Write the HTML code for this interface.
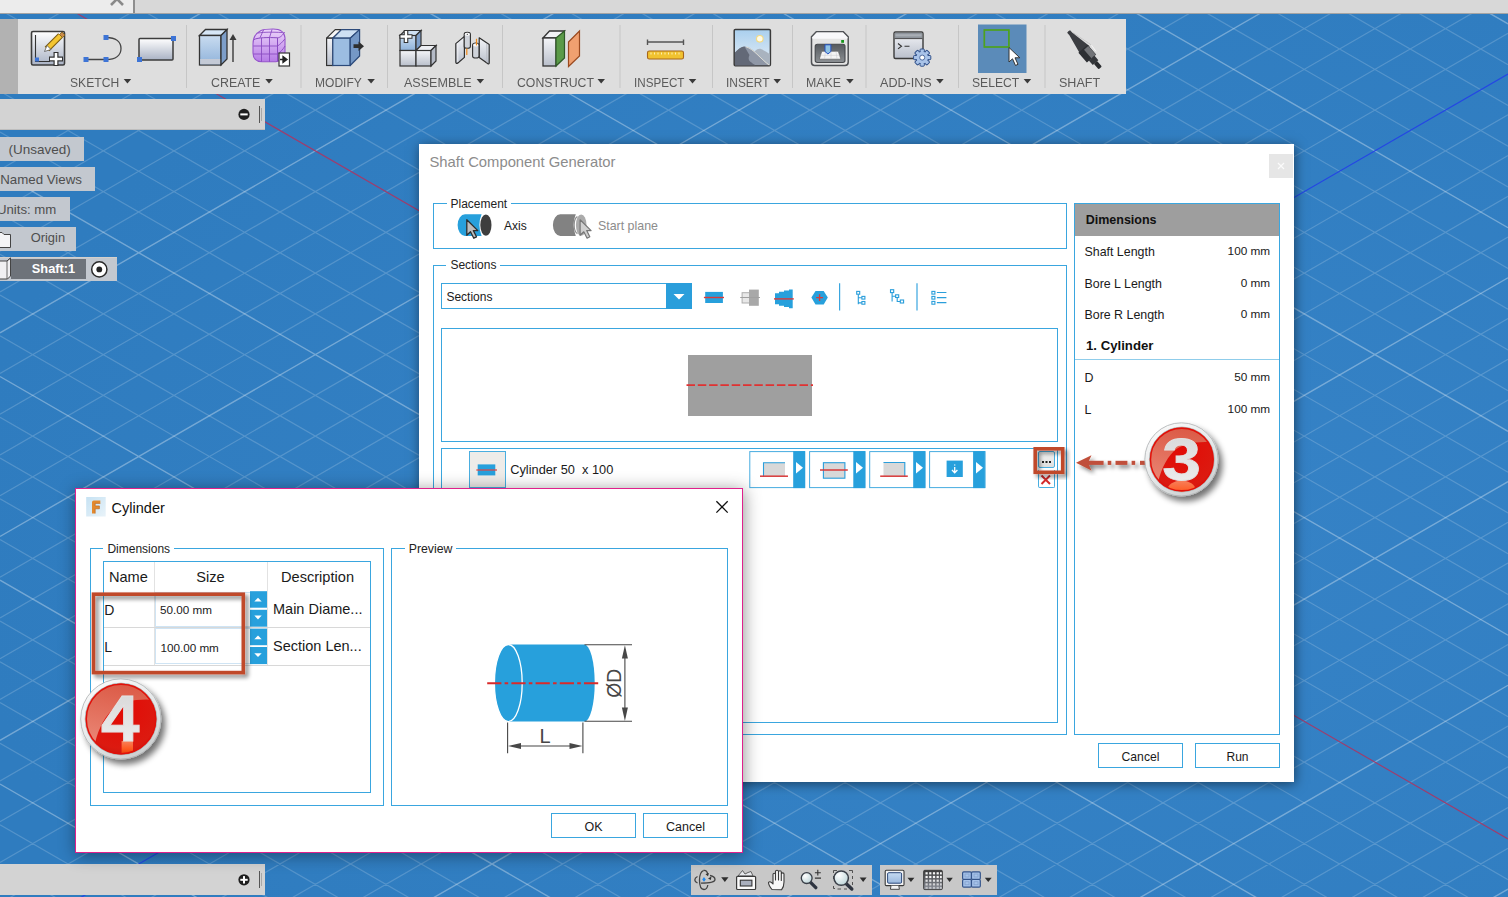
<!DOCTYPE html>
<html><head><meta charset="utf-8">
<style>
*{box-sizing:border-box;margin:0;padding:0}
html,body{width:1508px;height:897px;overflow:hidden;background:#307cc0;font-family:"Liberation Sans",sans-serif;}
.a{position:absolute}
.tl{position:absolute;font-size:12px;color:#5a5a5a;white-space:nowrap;line-height:12px;letter-spacing:0}
.sep{position:absolute;width:1px;background:#c4c4c4;top:25px;height:63px}
.gb{position:absolute;border:1px solid #3aa6df}
.glab{position:absolute;background:#fff;padding:0 4px;font-size:12px;color:#222;line-height:12px;white-space:nowrap}
.txt{position:absolute;white-space:nowrap;color:#1a1a1a}
</style></head><body>
<svg class="a" style="left:0;top:0" width="1508" height="897">
<defs><radialGradient id="bg" cx="0.72" cy="0.6" r="0.75"><stop offset="0" stop-color="#3683c7"/><stop offset="1" stop-color="#2f7cbf"/></radialGradient></defs>
<rect width="1508" height="897" fill="url(#bg)"/>
<path d="M0 -927.5 L1508 -57.6 M0 -886.8 L1508 -16.8 M0 -805.3 L1508 64.7 M0 -764.5 L1508 105.4 M0 -723.8 L1508 146.2 M0 -683.0 L1508 186.9 M0 -601.5 L1508 268.4 M0 -560.8 L1508 309.2 M0 -520.0 L1508 349.9 M0 -479.3 L1508 390.7 M0 -397.8 L1508 472.2 M0 -357.0 L1508 512.9 M0 -316.3 L1508 553.7 M0 -275.5 L1508 594.4 M0 -194.0 L1508 675.9 M0 -153.3 L1508 716.7 M0 -112.5 L1508 757.4 M0 -71.8 L1508 798.2 M0 9.7 L1508 879.7 M0 50.5 L1508 920.4 M0 91.2 L1508 961.2 M0 132.0 L1508 1001.9 M0 213.5 L1508 1083.4 M0 254.2 L1508 1124.2 M0 295.0 L1508 1164.9 M0 335.7 L1508 1205.7 M0 417.2 L1508 1287.2 M0 458.0 L1508 1327.9 M0 498.7 L1508 1368.7 M0 539.5 L1508 1409.4 M0 621.0 L1508 1490.9 M0 661.7 L1508 1531.7 M0 702.5 L1508 1572.4 M0 743.2 L1508 1613.2 M0 824.7 L1508 1694.7 M0 865.5 L1508 1735.4 M0 906.2 L1508 1776.2 M0 -34.0 L1508 -903.9 M0 6.8 L1508 -863.2 M0 47.5 L1508 -822.4 M0 88.3 L1508 -781.7 M0 169.8 L1508 -700.2 M0 210.5 L1508 -659.4 M0 251.3 L1508 -618.7 M0 292.0 L1508 -577.9 M0 373.5 L1508 -496.4 M0 414.3 L1508 -455.7 M0 455.0 L1508 -414.9 M0 495.8 L1508 -374.2 M0 577.3 L1508 -292.7 M0 618.0 L1508 -251.9 M0 658.8 L1508 -211.2 M0 699.5 L1508 -170.4 M0 781.0 L1508 -88.9 M0 821.8 L1508 -48.2 M0 862.5 L1508 -7.4 M0 903.3 L1508 33.3 M0 984.8 L1508 114.8 M0 1025.5 L1508 155.6 M0 1066.3 L1508 196.3 M0 1107.0 L1508 237.1 M0 1188.5 L1508 318.6 M0 1229.3 L1508 359.3 M0 1270.0 L1508 400.1 M0 1310.8 L1508 440.8 M0 1392.3 L1508 522.3 M0 1433.0 L1508 563.1 M0 1473.8 L1508 603.8 M0 1514.5 L1508 644.6 M0 1596.0 L1508 726.1 M0 1636.8 L1508 766.8 M0 1677.5 L1508 807.6 M0 1718.3 L1508 848.3 M0 1799.8 L1508 929.8" stroke="#ffffff" stroke-opacity="0.175" stroke-width="1.25" fill="none"/>
<path d="M0 -846.0 L1508 23.9 M0 -642.3 L1508 227.7 M0 -438.5 L1508 431.4 M0 -234.8 L1508 635.2 M0 172.7 L1508 1042.7 M0 376.5 L1508 1246.4 M0 580.2 L1508 1450.2 M0 784.0 L1508 1653.9 M0 129.0 L1508 -740.9 M0 332.8 L1508 -537.2 M0 536.5 L1508 -333.4 M0 740.3 L1508 -129.7 M0 1147.8 L1508 277.8 M0 1351.5 L1508 481.6 M0 1555.3 L1508 685.3 M0 1759.0 L1508 889.1" stroke="#ffffff" stroke-opacity="0.33" stroke-width="1.4" fill="none"/>
<path d="M0 -31.0 L1508 838.9" stroke="#a03c6c" stroke-width="1.15" fill="none"/>
<path d="M0 944.0 L1508 74.1" stroke="#2446e4" stroke-width="1.15" fill="none"/>
</svg>
<!-- TOPBAR -->
<div class="a" style="left:0;top:0;width:1508px;height:14px;background:#d8d8d8;border-bottom:1px solid #a4a4a4"></div>
<div class="a" style="left:0;top:0;width:133px;height:13px;background:#ececec"></div>
<div class="a" style="left:133px;top:0;width:2px;height:13px;background:#8e8e8e"></div>
<svg class="a" style="left:108px;top:-8px" width="18" height="16"><path d="M3 13 L9 7 L15 13" stroke="#8a8a8a" stroke-width="2.6" fill="none"/></svg>
<!-- TOOLBAR -->
<div class="a" style="left:0;top:19px;width:18px;height:75px;background:#b2b2b2"></div>
<div class="a" style="left:18px;top:19px;width:1108px;height:75px;background:#dedede"></div>
<!--TB-->
<svg class="a" style="left:0;top:0" width="1126" height="94">
<defs>
<linearGradient id="gw" x1="0" y1="0" x2="0" y2="1"><stop offset="0" stop-color="#ffffff"/><stop offset="1" stop-color="#a9b2c4"/></linearGradient>
<linearGradient id="gb1" x1="0" y1="0" x2="0" y2="1"><stop offset="0" stop-color="#c9dcf0"/><stop offset="1" stop-color="#8fb2da"/></linearGradient>
<linearGradient id="gp" x1="0" y1="0" x2="0" y2="1"><stop offset="0" stop-color="#ecd4fa"/><stop offset="1" stop-color="#b57ae6"/></linearGradient>
<linearGradient id="gg" x1="0" y1="0" x2="0" y2="1"><stop offset="0" stop-color="#f4f5f8"/><stop offset="1" stop-color="#b9bfcb"/></linearGradient>
<linearGradient id="gsky" x1="0" y1="0" x2="0" y2="1"><stop offset="0" stop-color="#a9cfee"/><stop offset="1" stop-color="#e6eef6"/></linearGradient>
</defs>
<!-- separators -->
<g stroke="#c6c6c6" stroke-width="1">
<path d="M186.5 25V88M301 25V88M387.5 25V88M502.5 25V88M620 25V88M712.5 25V88M792.5 25V88M866 25V88M958.5 25V88M1045 25V88"/>
</g>
<!-- 1 sketch -->
<rect x="31.5" y="31.5" width="33" height="33.5" rx="1.5" fill="url(#gw)" stroke="#3c3c3c" stroke-width="1.6"/>
<path d="M35.5 35V61.5H50" stroke="#333" stroke-width="1.1" fill="none"/>
<rect x="35" y="57.5" width="4" height="4" fill="#3d74d6"/>
<path d="M47 49 L60.5 35.5" stroke="#7a5a10" stroke-width="6.5" stroke-linecap="butt"/>
<path d="M47 49 L60.5 35.5" stroke="#f3c531" stroke-width="4.5"/>
<path d="M59.5 34.5 L62 32 L65 35 L62.5 37.5Z" fill="#c98a4a" stroke="#7a5a10" stroke-width="0.8"/>
<path d="M44.5 51.5 L47 45.5 L51 49.5Z" fill="#fff" stroke="#555" stroke-width="0.8"/>
<path d="M56 52V66M49 59H63" stroke="#333" stroke-width="5"/>
<path d="M56 53V65M50 59H62" stroke="#fff" stroke-width="2.6"/>
<!-- 2 line arc -->
<path d="M86 59.5H106M106 37.5C116 37.5 121 42 121 48.5C121 55 116 59.5 106 59.5" stroke="#444" stroke-width="1.3" fill="none"/>
<rect x="83.5" y="57" width="5" height="5" fill="#3d74d6"/><rect x="103.5" y="57" width="5" height="5" fill="#3d74d6"/><rect x="103.5" y="35" width="5" height="5" fill="#3d74d6"/>
<!-- 3 rect -->
<rect x="139" y="38.5" width="34" height="21.5" rx="1" fill="url(#gw)" stroke="#3c3c3c" stroke-width="1.5"/>
<rect x="137" y="57" width="5" height="5" fill="#3d74d6"/><rect x="171" y="36" width="5" height="5" fill="#3d74d6"/>
<!-- 4 extrude -->
<path d="M199.5 35.5 L205.5 29.5 L227 29.5 L221 35.5Z" fill="#d6e6f6" stroke="#333" stroke-width="1.3"/>
<rect x="199.5" y="35.5" width="21.5" height="29.5" fill="url(#gb1)" stroke="#333" stroke-width="1.3"/>
<rect x="200.2" y="59" width="20.2" height="5.3" fill="#c4cad6"/>
<path d="M221 35.5 L227 29.5 L227 59 L221 65Z" fill="#7d9ec9" stroke="#333" stroke-width="1.3"/>
<path d="M233 62V37" stroke="#3a3a3a" stroke-width="1.4"/><path d="M229.5 40 L233 34 L236.5 40Z" fill="#3a3a3a"/>
<!-- 5 form -->
<path d="M253 44C253 38 256 33 261 30.5C264 29.3 268 29 273 29C279 29 284.5 31 285 38V52C285 57 281 61.5 276 61.8H262C256 61.8 253 58 253 53Z" fill="url(#gp)" stroke="#9656cc" stroke-width="1.1"/>
<path d="M254 39.5C258 37.5 268 37.3 277.5 37.8C280 37.9 283 35 284.5 32" fill="none" stroke="#8a4cc2" stroke-width="1"/>
<path d="M277.5 37.8V61.5" stroke="#8a4cc2" stroke-width="1"/>
<path d="M253.3 46H277.5M253.3 54H277.5M261.5 38V61.8M269.5 37.5V61.8M258 33C265 32 272 32 282 32.5M263.5 30L260 37.8M272 29.5L269.5 37.5M277.5 46C280 44.5 282.5 42 284.8 39M277.5 54C280 52.5 283 49.5 285 46" fill="none" stroke="#8a4cc2" stroke-width="0.9"/>
<rect x="279" y="53" width="10.5" height="13" fill="#fff" stroke="#333" stroke-width="1.2"/>
<path d="M280 59.5H285M283 56.5L287 59.5L283 62.5Z" stroke="#222" stroke-width="1.3" fill="#222"/>
<!-- 6 modify -->
<path d="M326.6 38.2L335.2 29.6H341.5L332.8 38.2Z" fill="#f8f8f8" stroke="#333" stroke-width="1.2" stroke-linejoin="round"/>
<rect x="326.6" y="38.2" width="6.2" height="27.3" fill="url(#gg)" stroke="#333" stroke-width="1.2"/>
<path d="M332.8 38.2L341.5 29.6H359.6L350.2 38.2Z" fill="#cde0f3" stroke="#2c4a7a" stroke-width="1.2" stroke-linejoin="round"/>
<rect x="332.8" y="38.2" width="17.4" height="27.3" fill="#9cbde1" stroke="#2c4a7a" stroke-width="1.2"/>
<path d="M350.2 38.2L359.6 29.6V56L350.2 65.5Z" fill="#7598c6" stroke="#2c4a7a" stroke-width="1.2" stroke-linejoin="round"/>
<path d="M353.5 44.3H358.5V41.5L364 46.2L358.5 50.9V48.1H353.5Z" fill="#2e2e2e"/>
<!-- 7 assemble -->
<path d="M400 35.5 L405 30.5 L421 30.5 L416 35.5Z" fill="#cfe0f2" stroke="#333" stroke-width="1.2"/>
<rect x="400" y="35.5" width="16" height="15" fill="url(#gb1)" stroke="#333" stroke-width="1.2"/>
<path d="M416 35.5 L421 30.5 L421 45.5 L416 50.5Z" fill="#7d9ec9" stroke="#333" stroke-width="1.2"/>
<path d="M416 50.5 L421 45.5 L436 45.5 L431 50.5Z" fill="#eef0f4" stroke="#333" stroke-width="1.2"/>
<rect x="400" y="50.5" width="16" height="15.5" fill="url(#gg)" stroke="#333" stroke-width="1.2"/>
<rect x="416" y="50.5" width="15" height="15.5" fill="url(#gg)" stroke="#333" stroke-width="1.2"/>
<path d="M431 50.5 L436 45.5 L436 61 L431 66Z" fill="#b4bac6" stroke="#333" stroke-width="1.2"/>
<path d="M406 30V43M399.5 36.5H412.5" stroke="#333" stroke-width="4.6"/>
<path d="M406 31V42M400.5 36.5H411.5" stroke="#fff" stroke-width="2.4"/>
<!-- 8 joint -->
<path d="M455.8 43.6L464.4 36.4V57.4L457.6 63.2Q455.8 64 455.8 62Z" fill="url(#gg)" stroke="#2e2e2e" stroke-width="1.2" stroke-linejoin="round"/>
<path d="M457.8 43V62" stroke="#f4f4f6" stroke-width="0.9"/>
<path d="M464.2 34.2Q464.2 32.3 467.3 32.3Q470.4 32.3 470.4 34.2V46.5Q470.4 48.3 467.3 48.3Q464.2 48.3 464.2 46.5Z" fill="#cfd3da" stroke="#2e2e2e" stroke-width="1.1"/>
<ellipse cx="467.3" cy="34.3" rx="2.6" ry="1.5" fill="#fafafa"/><circle cx="467.3" cy="34.3" r="0.6" fill="#333"/>
<path d="M466.8 48.6V55" stroke="#f08a1c" stroke-width="1.2"/>
<path d="M479.2 37.8L489.2 44.6V63.2Q489 64.3 487.6 63.4L479.2 57.4Z" fill="url(#gg)" stroke="#2e2e2e" stroke-width="1.2" stroke-linejoin="round"/>
<path d="M486.8 43.8V62.3" stroke="#b8bcc4" stroke-width="0.9"/>
<path d="M472.6 45Q472.6 43 475.8 43Q479 43 479 45V56.2Q479 58 475.8 58Q472.6 58 472.6 56.2Z" fill="#cfd3da" stroke="#2e2e2e" stroke-width="1.1"/>
<ellipse cx="475.8" cy="45" rx="2.6" ry="1.5" fill="#fafafa"/>
<path d="M476.5 38.8V45.4" stroke="#f08a1c" stroke-width="1.2"/>
<!-- 9 construct -->
<path d="M543 38 L549.5 31 L564.5 31 L558 38Z" fill="#f2f3f6" stroke="#333" stroke-width="1.3"/>
<rect x="543" y="38" width="13" height="28" fill="url(#gg)" stroke="#333" stroke-width="1.3"/>
<path d="M556 38 L564.5 31 L564.5 58 L556 66Z" fill="#5a9a48" stroke="#2f5a28" stroke-width="1.2"/>
<path d="M568.5 42 L579.5 31 L579.5 56 L568.5 66.5Z" fill="#f0a070" stroke="#9a4a20" stroke-width="1.2"/>
<!-- 10 inspect -->
<path d="M647.5 42H683.5M647.5 39.5V45M683.5 39.5V45" stroke="#555" stroke-width="1.4"/>
<rect x="647.5" y="51" width="36" height="8" rx="1.8" fill="#f1c230" stroke="#a8661a" stroke-width="1.1"/>
<path d="M651 52.5V54.5M654.5 52.5V54.5M658 52.5V54.5M661.5 52.5V54.5M665 52.5V54.5M668.5 52.5V54.5M672 52.5V54.5M675.5 52.5V54.5M679 52.5V54.5" stroke="#fff6c0" stroke-width="0.9"/>
<!-- 11 insert -->
<rect x="734.2" y="29.4" width="36.2" height="36.3" rx="1.2" fill="url(#gsky)" stroke="#3a3a3a" stroke-width="1.5"/>
<circle cx="759.8" cy="38.8" r="3.3" fill="#fffbe8" stroke="#f5da80" stroke-width="1.1"/>
<path d="M754.5 51.5C756.5 49.5 758 48.8 759.5 48.8C762 48.8 766 51.5 769.8 54.2V65H760Z" fill="#a9b3bf"/>
<path d="M735 52.5C738 49.5 741.5 46.6 744.5 46.6C749 46.6 753 50 757 54C761 58 765.5 62.5 769.3 65.2H735Z" fill="#8f97a6"/>
<path d="M735 52.5C738 49.5 741.5 46.6 744.5 46.6C746 49 747.5 52 749.5 55C748.5 57 748 59.5 750 61.5C752 63 754 64.5 755.5 65.2H735Z" fill="#636977"/>
<path d="M746 46.8C750 48 753 50.5 757 54.2C761 58 765.5 62.5 769.3 65.2" stroke="#f0ede0" stroke-width="0.8" fill="none"/>
<!-- 12 make -->
<defs><linearGradient id="cav" x1="0" y1="0" x2="0" y2="1"><stop offset="0" stop-color="#55595e"/><stop offset="1" stop-color="#8c9094"/></linearGradient></defs>
<path d="M816.3 31.8H843.3L848.2 36.8V62.3Q848.2 65.5 845 65.5H814.6Q811.5 65.5 811.5 62.3V36.8Z" fill="#e4e4e4" stroke="#505256" stroke-width="1.5"/>
<path d="M816.8 32.6H842.8L847.3 37.2V38.8H812.4V37.2Z" fill="#f8f8fa"/>
<rect x="815.2" y="44.2" width="29.8" height="18.3" rx="2.2" fill="url(#cav)" stroke="#46484c" stroke-width="1.1"/>
<path d="M819.3 59.2L821.8 51.3H838.3L840.9 59.2Z" fill="#f4f4f4" stroke="#555" stroke-width="0.6"/>
<path d="M820.5 55.3H839.7M825.5 51.5L824.5 59M831 51.5V59M836 51.5L837 59" stroke="#c8c8cc" stroke-width="0.5"/>
<path d="M825 44.8H830.9V51.5L827.95 54L825 51.5Z" fill="#8fc2e4" stroke="#2450c0" stroke-width="1"/>
<rect x="841.2" y="40" width="2.8" height="2.8" fill="#15941a"/>
<!-- 13 add-ins -->
<rect x="894" y="32" width="29" height="26.5" rx="1.5" fill="url(#gg)" stroke="#3a3a3a" stroke-width="1.4"/>
<rect x="894.8" y="32.8" width="27.4" height="5.6" fill="#8e949c"/>
<rect x="895.5" y="34.2" width="26" height="2.2" fill="#a9aeb5"/>
<path d="M894.7 38.6H922.3" stroke="#3a3a3a" stroke-width="0.9"/>
<path d="M898 43.5L901.5 46.2L898 48.9M904.5 46.3H909.5" stroke="#333" stroke-width="1.1" fill="none"/>
<g transform="translate(922.2 57.6)">
<g fill="#a9c3e8" stroke="#30508a" stroke-width="1"><rect x="-2.1" y="-8.6" width="4.2" height="4" rx="0.8" transform="rotate(0)"/><rect x="-2.1" y="-8.6" width="4.2" height="4" rx="0.8" transform="rotate(45)"/><rect x="-2.1" y="-8.6" width="4.2" height="4" rx="0.8" transform="rotate(90)"/><rect x="-2.1" y="-8.6" width="4.2" height="4" rx="0.8" transform="rotate(135)"/><rect x="-2.1" y="-8.6" width="4.2" height="4" rx="0.8" transform="rotate(180)"/><rect x="-2.1" y="-8.6" width="4.2" height="4" rx="0.8" transform="rotate(225)"/><rect x="-2.1" y="-8.6" width="4.2" height="4" rx="0.8" transform="rotate(270)"/><rect x="-2.1" y="-8.6" width="4.2" height="4" rx="0.8" transform="rotate(315)"/></g>
<circle r="6.3" fill="#a9c3e8" stroke="#30508a" stroke-width="1"/>
<g fill="#a9c3e8"><rect x="-1.5" y="-7.6" width="3" height="3" rx="0.8" transform="rotate(0)"/><rect x="-1.5" y="-7.6" width="3" height="3" rx="0.8" transform="rotate(45)"/><rect x="-1.5" y="-7.6" width="3" height="3" rx="0.8" transform="rotate(90)"/><rect x="-1.5" y="-7.6" width="3" height="3" rx="0.8" transform="rotate(135)"/><rect x="-1.5" y="-7.6" width="3" height="3" rx="0.8" transform="rotate(180)"/><rect x="-1.5" y="-7.6" width="3" height="3" rx="0.8" transform="rotate(225)"/><rect x="-1.5" y="-7.6" width="3" height="3" rx="0.8" transform="rotate(270)"/><rect x="-1.5" y="-7.6" width="3" height="3" rx="0.8" transform="rotate(315)"/></g>
<circle r="2.5" fill="#fff" stroke="#30508a" stroke-width="0.8"/>
</g>
<!-- 14 select -->
<rect x="978" y="24.5" width="48.5" height="48.5" fill="#5b8bb9"/>
<rect x="984.3" y="30" width="24.6" height="17" fill="none" stroke="#4ea21e" stroke-width="1.7"/>
<path d="M1009 47.5 L1009 62 L1012.5 58.8 L1015.5 65.5 L1018 64.3 L1015 57.8 L1019.8 57.8Z" fill="#fff" stroke="#333" stroke-width="1"/>
<!-- 15 shaft -->
<g transform="translate(1068.6 31.4) rotate(49)">
<path d="M4 -2.6L25 -8.2L33 -7.6" stroke="#f6f6f6" stroke-width="0.9" fill="none"/>
<path d="M4 -2.6L25 -8.2" stroke="#9a9a9a" stroke-width="0.5" fill="none"/>
<path d="M0 -1.9Q-0.8 0 0 1.9L3.5 2L25 6.2V-6.2L3.5 -2Z" fill="#3b3d41"/>
<rect x="22.5" y="-5.6" width="13" height="12.2" fill="#2d2f33"/>
<rect x="24" y="-5.2" width="11.5" height="5.6" fill="#717377"/>
<rect x="35.2" y="-3.6" width="6" height="7.4" fill="#34363a"/>
<rect x="41" y="-2.1" width="7.3" height="4.4" rx="1" fill="#2a2c2f"/>
</g>
</svg>
<div class="tl" style="left:70.3px;top:76.2px;font-size:13.7px;line-height:13.7px;transform:scaleX(0.885);transform-origin:0 0">SKETCH</div>
<div class="tl" style="left:211.4px;top:76.2px;font-size:13.7px;line-height:13.7px;transform:scaleX(0.905);transform-origin:0 0">CREATE</div>
<div class="tl" style="left:315.1px;top:76.2px;font-size:13.7px;line-height:13.7px;transform:scaleX(0.88);transform-origin:0 0">MODIFY</div>
<div class="tl" style="left:403.9px;top:76.2px;font-size:13.7px;line-height:13.7px;transform:scaleX(0.916);transform-origin:0 0">ASSEMBLE</div>
<div class="tl" style="left:516.6px;top:76.2px;font-size:13.7px;line-height:13.7px;transform:scaleX(0.895);transform-origin:0 0">CONSTRUCT</div>
<div class="tl" style="left:634px;top:76.2px;font-size:13.7px;line-height:13.7px;transform:scaleX(0.85);transform-origin:0 0">INSPECT</div>
<div class="tl" style="left:726px;top:76.2px;font-size:13.7px;line-height:13.7px;transform:scaleX(0.87);transform-origin:0 0">INSERT</div>
<div class="tl" style="left:806.4px;top:76.2px;font-size:13.7px;line-height:13.7px;transform:scaleX(0.9);transform-origin:0 0">MAKE</div>
<div class="tl" style="left:879.9px;top:76.2px;font-size:13.7px;line-height:13.7px;transform:scaleX(0.92);transform-origin:0 0">ADD-INS</div>
<div class="tl" style="left:972.2px;top:76.2px;font-size:13.7px;line-height:13.7px;transform:scaleX(0.887);transform-origin:0 0">SELECT</div>
<div class="tl" style="left:1059.2px;top:76.2px;font-size:13.7px;line-height:13.7px;transform:scaleX(0.915);transform-origin:0 0">SHAFT</div>
<svg class="a" style="left:0;top:0" width="1126" height="94"><g fill="#3a3a3a">
<path d="M123.7 79H131.2L127.45 83.6Z"/><path d="M265.3 79H272.8L269 83.6Z"/><path d="M367.4 79H374.9L371.1 83.6Z"/><path d="M476.6 79H484.1L480.3 83.6Z"/><path d="M597.5 79H605L601.2 83.6Z"/><path d="M688.8 79H696.3L692.5 83.6Z"/><path d="M773.5 79H781L777.2 83.6Z"/><path d="M846.2 79H853.7L849.9 83.6Z"/><path d="M936.2 79H943.7L939.9 83.6Z"/><path d="M1023.7 79H1031.2L1027.4 83.6Z"/>
</g></svg>

<!--/TB-->
<!-- BROWSER -->
<div class="a" style="left:0;top:99px;width:265px;height:31px;background:#d3d3d3;border-bottom:1px solid #bdbdbd"></div>
<!--BR-->
<svg class="a" style="left:0;top:99px" width="266" height="32"><circle cx="244" cy="15.4" r="5.6" fill="#1e1e1e"/><rect x="240.3" y="14.4" width="7.4" height="2" fill="#fff"/><path d="M259.5 7V24" stroke="#555" stroke-width="1"/><path d="M261.5 9V22" stroke="#a8a8a8" stroke-width="1"/></svg>
<div class="a" style="left:0;top:136.7px;width:84px;height:24.5px;background:#c3c8cf"></div>
<div class="a" style="left:0;top:166.6px;width:95px;height:24.5px;background:#c3c8cf"></div>
<div class="a" style="left:0;top:196.7px;width:70px;height:24.5px;background:#c3c8cf"></div>
<div class="a" style="left:0;top:226.6px;width:76px;height:24.5px;background:#c3c8cf"></div>
<div class="a" style="left:0;top:256.7px;width:117px;height:24.3px;background:#c3c8cf;border-top:1px solid #d4d0cc"></div>
<div class="a" style="left:11px;top:259.1px;width:75px;height:19.6px;background:#6e737a"></div>
<div class="txt" style="left:8.4px;top:142.7px;font-size:13.5px;line-height:13.5px;color:#4e4e4e">(Unsaved)</div>
<div class="txt" style="left:0.2px;top:172.6px;font-size:13.3px;line-height:13.3px;color:#4e4e4e">Named Views</div>
<div class="txt" style="left:-3px;top:202.9px;font-size:13.2px;line-height:13.2px;color:#4e4e4e">Units: mm</div>
<div class="txt" style="left:30.7px;top:232.4px;font-size:12.9px;line-height:12.9px;color:#4e4e4e">Origin</div>
<div class="txt" style="left:31.8px;top:262.7px;font-size:12.8px;line-height:12.8px;color:#fff;font-weight:bold">Shaft:1</div>
<svg class="a" style="left:0;top:225px" width="120" height="60">
<path d="M-2 7.5H2L4 9.5H10.5V22.5H-2Z" fill="#f4f4f6" stroke="#444" stroke-width="1"/>
<path d="M-2 36H7L10.5 33V51L7.5 54H-2Z" fill="#f0f0f2" stroke="#444" stroke-width="1"/>
<path d="M7 36V54M7 36L10.5 33" stroke="#444" stroke-width="0.8" fill="none"/>
<circle cx="99.3" cy="44.4" r="7.6" fill="#fff" stroke="#2a2a2a" stroke-width="1.5"/>
<circle cx="99.3" cy="44.4" r="2.9" fill="#222"/>
</svg>


<!--/BR-->
<!-- BOTTOM PANELS -->
<div class="a" style="left:0;top:864px;width:265px;height:31px;background:#d3d3d3"></div>
<svg class="a" style="left:0;top:864px" width="266" height="32"><circle cx="244" cy="15.8" r="5.6" fill="#1e1e1e"/><rect x="240.3" y="14.8" width="7.4" height="2" fill="#fff"/><rect x="243" y="12.1" width="2" height="7.4" fill="#fff"/><path d="M259.5 7V24" stroke="#555" stroke-width="1"/><path d="M261.5 9V22" stroke="#a8a8a8" stroke-width="1"/></svg>
<div class="a" style="left:691px;top:865px;width:181px;height:30px;background:#c8c8c8"></div>
<div class="a" style="left:880px;top:865px;width:117px;height:30px;background:#c8c8c8"></div>
<!--NV-->
<svg class="a" style="left:0;top:0" width="1000" height="897">
<defs>
<radialGradient id="lens" cx="0.35" cy="0.3" r="0.8"><stop offset="0" stop-color="#ffffff"/><stop offset="1" stop-color="#b9d2d6"/></radialGradient>
<linearGradient id="scr" x1="0" y1="0" x2="0" y2="1"><stop offset="0" stop-color="#c6dbf2"/><stop offset="1" stop-color="#9ab8de"/></linearGradient>
<linearGradient id="grd" x1="0" y1="0" x2="0" y2="1"><stop offset="0" stop-color="#3a3a3a"/><stop offset="1" stop-color="#8a8e98"/></linearGradient>
</defs>
<g fill="#2e2e2e">
<path d="M721.2 877.3H728.5L724.85 881.9Z"/><path d="M859.7 877.5H866.6L863.15 882Z"/><path d="M907.5 877.8H914.4L910.95 881.9Z"/><path d="M946.4 877.8H952.8L949.6 881.9Z"/><path d="M984.8 877.8H991.7L988.25 881.9Z"/>
</g>
<!-- orbit -->
<g fill="none" stroke="#444" stroke-width="1.3">
<path d="M703.5 870.5C700 872 699.5 876 699.5 880C699.5 885 701 889.5 704 889.5C706.5 889.5 707.5 887 707.8 885"/>
<path d="M697.5 876.5C695.5 877.5 694.8 879 694.8 880C694.8 881.5 696 882.3 697.5 883"/>
<path d="M701 883.2C706 883.2 715 882.5 715 879.5C715 877.5 712.5 876 710 875.5"/>
<path d="M703.5 870.5C706 870 707.5 872 707.5 874"/>
</g>
<path d="M705.5 874.3L709 873L708 876.2Z" fill="#333"/><path d="M708 878.5L711.5 876.5L710.8 880Z" fill="#333"/>
<path d="M704 877L705.8 879.4L704 881.8L702.2 879.4Z" fill="#1e88f0"/>
<!-- fit -->
<path d="M738 876L742.5 870.5L745 874L748 872.5L751 871.5L753 876Z" fill="#e6e8ec" stroke="#555" stroke-width="0.9"/>
<rect x="736.6" y="876.3" width="19" height="13.2" rx="1" fill="#fafafa" stroke="#3a3a3a" stroke-width="1.2"/>
<rect x="740.3" y="880.2" width="11.6" height="5.8" fill="#a9afbd" stroke="#333" stroke-width="1.1"/>
<!-- hand -->
<path d="M772 889.5C770 887 768.5 884 768.5 882.5C769.5 881 771.5 882 773 884V874.5C773 872.8 775.5 872.8 775.5 874.5V880V871.5C775.5 869.8 778.5 869.8 778.5 871.5V880V872C778.5 870.3 781.3 870.3 781.3 872V880.5V874C781.3 872.5 784 872.5 784 874V882C784 885.5 783 888 781.5 889.8Z" fill="#f7f7f7" stroke="#3a3a3a" stroke-width="1.1" stroke-linejoin="round"/>
<!-- zoom +- -->
<path d="M810.8 882.6L815.8 887.6" stroke="#2e3440" stroke-width="3.4" stroke-linecap="round"/>
<circle cx="806.7" cy="878.1" r="5.4" fill="url(#lens)" stroke="#3a3f48" stroke-width="1.3"/>
<path d="M817.8 869.8V875.6M814.9 872.8H820.8M814.9 878.1H821" stroke="#333" stroke-width="1.1"/>
<!-- zoom window -->
<path d="M833.5 870.5H837M849 870.5H852.5V873M852.5 876V879M852.5 882V885M837.5 889H841M844 889H847M833.5 886V888.5H835M833.5 870.5V873M833.5 876V879" stroke="#444" stroke-width="0.9" stroke-dasharray="none" fill="none"/>
<path d="M846 883.5L851.8 889" stroke="#2e3440" stroke-width="3.4" stroke-linecap="round"/>
<circle cx="841.2" cy="878.1" r="7.2" fill="url(#lens)" stroke="#3a3f48" stroke-width="1.5"/>
<!-- display -->
<rect x="885.2" y="870.3" width="18.8" height="15.3" rx="1.2" fill="#f4f4f4" stroke="#3a3a3a" stroke-width="1.1"/>
<rect x="887.6" y="872.7" width="14" height="10.5" rx="1.2" fill="url(#scr)" stroke="#2e4a7c" stroke-width="1"/>
<path d="M891 885.8L890.4 889.3H899.4L898.8 885.8" fill="#f4f4f4" stroke="#3a3a3a" stroke-width="0.9"/>
<!-- grid -->
<rect x="923.6" y="870.3" width="18.8" height="19.3" rx="1.2" fill="url(#grd)" stroke="#3a3a3a" stroke-width="0.9"/>
<g fill="#fff" opacity="0.95">
<rect x="925.5" y="872.2" width="2.2" height="2.2"/><rect x="929.2" y="872.2" width="2.2" height="2.2"/><rect x="932.9" y="872.2" width="2.2" height="2.2"/><rect x="936.6" y="872.2" width="2.2" height="2.2"/><rect x="940" y="872.2" width="1.8" height="2.2"/>
<rect x="925.5" y="875.9" width="2.2" height="2.2"/><rect x="929.2" y="875.9" width="2.2" height="2.2"/><rect x="932.9" y="875.9" width="2.2" height="2.2"/><rect x="936.6" y="875.9" width="2.2" height="2.2"/><rect x="940" y="875.9" width="1.8" height="2.2"/>
<rect x="925.5" y="879.6" width="2.2" height="2.2" opacity="0.85"/><rect x="929.2" y="879.6" width="2.2" height="2.2" opacity="0.85"/><rect x="932.9" y="879.6" width="2.2" height="2.2" opacity="0.85"/><rect x="936.6" y="879.6" width="2.2" height="2.2" opacity="0.85"/><rect x="940" y="879.6" width="1.8" height="2.2" opacity="0.85"/>
<rect x="925.5" y="883.3" width="2.2" height="2.2" opacity="0.7"/><rect x="929.2" y="883.3" width="2.2" height="2.2" opacity="0.7"/><rect x="932.9" y="883.3" width="2.2" height="2.2" opacity="0.7"/><rect x="936.6" y="883.3" width="2.2" height="2.2" opacity="0.7"/><rect x="940" y="883.3" width="1.8" height="2.2" opacity="0.7"/>
<rect x="925.5" y="886.8" width="2.2" height="2" opacity="0.55"/><rect x="929.2" y="886.8" width="2.2" height="2" opacity="0.55"/><rect x="932.9" y="886.8" width="2.2" height="2" opacity="0.55"/><rect x="936.6" y="886.8" width="2.2" height="2" opacity="0.55"/><rect x="940" y="886.8" width="1.8" height="2" opacity="0.55"/>
</g>
<!-- viewports -->
<g fill="#a7c3ea" stroke="#34548a" stroke-width="1.2">
<rect x="962.6" y="871.8" width="8.8" height="7.6" rx="1.2"/><rect x="971.5" y="871.8" width="8.8" height="7.6" rx="1.2"/>
<rect x="962.6" y="879.5" width="8.8" height="7.6" rx="1.2"/><rect x="971.5" y="879.5" width="8.8" height="7.6" rx="1.2"/>
</g>
<g fill="none" stroke="#7d9cc9" stroke-width="0.7"><rect x="965" y="874" width="4" height="3"/><rect x="974" y="874" width="4" height="3"/><rect x="965" y="881.8" width="4" height="3"/><rect x="974" y="881.8" width="4" height="3"/></g>
</svg>

<!--/NV-->
<!-- SHAFT DIALOG -->
<div class="a" style="left:419px;top:144px;width:875px;height:638px;background:#fff;box-shadow:1px 2px 11px rgba(0,0,0,0.5)"></div>
<!--SH-->
<div class="txt" style="left:429.5px;top:155.1px;font-size:14.8px;line-height:14.8px;color:#8c8c8c">Shaft Component Generator</div>
<div class="a" style="left:1269px;top:154px;width:24px;height:24px;background:#e6e6e6"></div>
<svg class="a" style="left:1269px;top:154px" width="24" height="24"><path d="M9 9L15 15M15 9L9 15" stroke="#fbfbfb" stroke-width="1.2"/></svg>
<!-- placement group -->
<div class="gb" style="left:433px;top:203px;width:634px;height:46px"></div>
<div class="glab" style="left:446.5px;top:198.2px;font-size:12px;line-height:12px">Placement</div>
<svg class="a" style="left:440px;top:205px" width="240" height="40">
<path d="M41.6 9.3H25A7.4 10.8 0 0 0 25 30.9H41.6Q37.2 20.1 41.6 9.3Z" fill="#27a0dc"/>
<ellipse cx="45.9" cy="20.1" rx="5.6" ry="10.7" fill="#3e3e3e"/>
<path d="M26.8 14.8V30.3L30.5 26.8L33.8 33.2L36.5 31.8L33.4 25.6H37.8Z" fill="#bdbdbd" stroke="#2e2e2e" stroke-width="1.3" stroke-linejoin="round"/>
<path d="M135.8 9.3H120.3A7.4 10.8 0 0 0 120.3 30.9H135.8Q131.4 20.1 135.8 9.3Z" fill="#828282"/>
<ellipse cx="141.2" cy="20.1" rx="5.3" ry="10.7" fill="#ababab"/>
<path d="M137.4 11.5A4.6 9 0 0 0 137.4 28.7" fill="none" stroke="#8f8f8f" stroke-width="1.2"/>
<path d="M140.1 14.8V30.3L143.8 26.8L147.1 33.2L149.8 31.8L146.7 25.6H151.1Z" fill="#d0d0d0" stroke="#777" stroke-width="1.2" stroke-linejoin="round"/>
</svg>
<div class="txt" style="left:504px;top:220.3px;font-size:12px;line-height:12px;color:#1a1a1a">Axis</div>
<div class="txt" style="left:598px;top:220.3px;font-size:12.4px;line-height:12.4px;color:#8c8c8c">Start plane</div>
<!-- sections group -->
<div class="gb" style="left:433px;top:265px;width:634px;height:470px"></div>
<div class="glab" style="left:446.4px;top:259.3px;font-size:12px;line-height:12px">Sections</div>
<div class="a" style="left:441px;top:283px;width:251px;height:26px;border:1px solid #3aa6df;background:#fff"></div>
<div class="a" style="left:666px;top:283px;width:26px;height:26px;background:#2a9edb"></div>
<svg class="a" style="left:666px;top:283px" width="26" height="26"><path d="M7.5 11H18.5L13 16.5Z" fill="#fff"/></svg>
<div class="txt" style="left:446.4px;top:290.8px;font-size:12px;line-height:12px;color:#1a1a1a">Sections</div>
<svg class="a" style="left:690px;top:280px" width="270" height="34">
<rect x="15.2" y="11.9" width="17.7" height="11.1" fill="#27a0dc"/>
<path d="M13.9 17.5H34" stroke="#d93a3a" stroke-width="1.4"/>
<rect x="52.1" y="12.7" width="7.5" height="10.3" fill="#e8e8e8" stroke="#adadad" stroke-width="1"/>
<rect x="59" y="9.6" width="9.8" height="16.2" fill="#a8a8a8"/>
<path d="M50.2 17.5H70" stroke="#a0a0a0" stroke-width="1"/>
<path d="M85 13.3H89V11.8H94V10.6H99V9.6H102.7V28.2H99V26.9H94V25.8H89V24.3H85Z" fill="#27a0dc"/>
<path d="M84 18.9H103.8" stroke="#d93a3a" stroke-width="1.4"/>
<path d="M125.5 11H133.7L137.8 17.6L133.7 24.4H125.5L121.4 17.6Z" fill="#27a0dc"/>
<path d="M129.6 14.2V21M126.2 17.6H133" stroke="#d93a3a" stroke-width="1.3"/>
<path d="M149.6 3.2V30.6M227 3.2V30.6" stroke="#3aa6df" stroke-width="1.2"/>
<g fill="none" stroke="#2a9edb" stroke-width="1.1">
<rect x="166.7" y="11.4" width="3" height="2.8"/><rect x="171.9" y="16.4" width="3" height="2.7"/><rect x="171.9" y="21.5" width="3" height="2.7"/>
<path d="M168.3 14.2V24.3M168.3 17.8H171.9M168.3 22.9H171.9"/>
<rect x="200.5" y="9.7" width="3.2" height="2.9"/><rect x="205.6" y="14.8" width="3.1" height="2.7"/><rect x="210.3" y="20" width="3.3" height="3"/>
<path d="M202.1 12.6V21.5M202.1 16.2H205.6M207.2 17.5V21.5H210.3"/>
<rect x="241.9" y="11.4" width="3" height="2.7"/><rect x="241.9" y="16.4" width="3" height="2.7"/><rect x="241.9" y="21.4" width="3" height="2.8"/>
<path d="M246.9 12.5H256.4M246.9 17.6H256.4M246.9 22.6H256.4"/>
</g>
</svg>
<!-- preview box -->
<div class="a" style="left:441px;top:328px;width:617px;height:114px;border:1px solid #3aa6df"></div>
<div class="a" style="left:688px;top:354.6px;width:123.5px;height:61px;background:#9f9f9f"></div>
<svg class="a" style="left:680px;top:380px" width="140" height="10"><path d="M6.5 5.1H133" stroke="#e03232" stroke-width="1.6" stroke-dasharray="8.5 2.8"/></svg>
<!-- section list -->
<div class="a" style="left:441px;top:448px;width:617px;height:275px;border:1px solid #3aa6df"></div>
<div class="a" style="left:469.3px;top:451.2px;width:36.6px;height:36.4px;background:#eeece9;border:1px solid #4aaee0"></div>
<svg class="a" style="left:469px;top:451px" width="37" height="37"><rect x="8.7" y="13.4" width="17.6" height="11" fill="#27a0dc"/><path d="M7.3 19H28" stroke="#d94a4a" stroke-width="1.3"/></svg>
<div class="txt" style="left:510.2px;top:464.3px;font-size:12.8px;line-height:12.8px;color:#1a1a1a">Cylinder 50&nbsp; x 100</div>
<!-- four buttons -->
<svg class="a" style="left:745px;top:447px" width="245" height="45">
<g fill="#fff" stroke="#46ace0" stroke-width="1">
<rect x="4.8" y="4.6" width="55" height="36"/><rect x="64.6" y="4.6" width="55.5" height="36"/><rect x="124.7" y="4.6" width="55.5" height="36"/><rect x="184.6" y="4.6" width="55.5" height="36"/>
</g>
<g fill="#27a0dc"><rect x="48.2" y="4.1" width="11.8" height="37"/><rect x="108.3" y="4.1" width="11.8" height="37"/><rect x="168.2" y="4.1" width="11.8" height="37"/><rect x="228.1" y="4.1" width="11.8" height="37"/></g>
<g fill="#fff"><path d="M51 15V26.5L58 20.7Z"/><path d="M111 15V26.5L118 20.7Z"/><path d="M171 15V26.5L178 20.7Z"/><path d="M231 15V26.5L238 20.7Z"/></g>
<rect x="18.5" y="15.7" width="21.5" height="14" fill="#d8d8d8"/>
<path d="M18.5 30V15.7H40" stroke="#2a9edb" stroke-width="1.1" fill="none"/>
<path d="M15 29.2H43" stroke="#d93a3a" stroke-width="1.5"/>
<rect x="78.4" y="15.7" width="21.5" height="15.5" fill="#d8d8d8" stroke="#2a9edb" stroke-width="1.1"/>
<path d="M75 23H102.8" stroke="#d93a3a" stroke-width="1.5"/>
<rect x="138.5" y="15.5" width="21.3" height="14" fill="#d8d8d8"/>
<path d="M138.5 15.5H159.8V30" stroke="#2a9edb" stroke-width="1.1" fill="none"/>
<path d="M135.2 29.2H162.8" stroke="#d93a3a" stroke-width="1.5"/>
<rect x="201.6" y="13.6" width="16.2" height="16.4" fill="#27a0dc"/>
<path d="M209.7 17.5V18.5M209.7 20V25.5M207 23L209.7 25.8L212.4 23" stroke="#fff" stroke-width="1.3" fill="none"/>
</svg>
<!-- ... and x -->
<div class="a" style="left:1037.6px;top:451.2px;width:17.4px;height:17px;border:1px solid #4aaee0;border-radius:2px;background:linear-gradient(#f6f6f6,#dedede)"></div>
<svg class="a" style="left:1037px;top:451px" width="19" height="19"><g fill="#222"><rect x="5" y="10" width="2" height="2"/><rect x="8.5" y="10" width="2" height="2"/><rect x="12" y="10" width="2" height="2"/></g></svg>
<div class="a" style="left:1037.6px;top:470px;width:17.4px;height:18px;border:1px solid #4aaee0;border-top:none;border-radius:0 0 2px 2px;background:#fff"></div>
<svg class="a" style="left:1037px;top:470px" width="19" height="19"><path d="M4.5 5.5L13 14M13 5.5L4.5 14" stroke="#d42a2a" stroke-width="2"/></svg>
<!-- dimensions panel -->
<div class="a" style="left:1074px;top:203px;width:206px;height:532px;border:1px solid #3aa6df"></div>
<div class="a" style="left:1075px;top:204px;width:204px;height:31.5px;background:#9e9e9e"></div>
<div class="a" style="left:1075px;top:359px;width:204px;height:1px;background:#8fcdeb"></div>
<div class="txt" style="left:1085.7px;top:214.4px;font-size:12.5px;line-height:12.5px;font-weight:bold;color:#111">Dimensions</div>
<div class="txt" style="left:1084.5px;top:246.3px;font-size:12.4px;line-height:12.4px">Shaft Length</div>
<div class="txt" style="left:1084.5px;top:277.5px;font-size:12.4px;line-height:12.4px">Bore L Length</div>
<div class="txt" style="left:1084.5px;top:308.7px;font-size:12.4px;line-height:12.4px">Bore R Length</div>
<div class="txt" style="left:1086px;top:339.2px;font-size:13.2px;line-height:13.2px;font-weight:bold;color:#111">1. Cylinder</div>
<div class="txt" style="left:1084.5px;top:372.3px;font-size:12.4px;line-height:12.4px">D</div>
<div class="txt" style="left:1084.5px;top:403.5px;font-size:12.4px;line-height:12.4px">L</div>
<div class="txt" style="right:237.8px;top:246.3px;font-size:11.8px;line-height:11.8px;text-align:right">100 mm</div>
<div class="txt" style="right:237.8px;top:277.5px;font-size:11.8px;line-height:11.8px">0 mm</div>
<div class="txt" style="right:237.8px;top:308.7px;font-size:11.8px;line-height:11.8px">0 mm</div>
<div class="txt" style="right:237.8px;top:372.3px;font-size:11.8px;line-height:11.8px">50 mm</div>
<div class="txt" style="right:237.8px;top:403.5px;font-size:11.8px;line-height:11.8px">100 mm</div>
<!-- buttons -->
<div class="a" style="left:1098px;top:743px;width:85px;height:25px;border:1px solid #3aa6df;font-size:12.2px;line-height:12.2px;text-align:center;padding-top:7.1px;color:#1a1a1a">Cancel</div>
<div class="a" style="left:1195px;top:743px;width:85px;height:25px;border:1px solid #3aa6df;font-size:12px;line-height:12px;text-align:center;padding-top:7.1px;color:#1a1a1a">Run</div>

<!--/SH-->
<!-- CYLINDER DIALOG -->
<div class="a" style="left:75px;top:488px;width:668px;height:365px;background:#fff;border:1px solid #e0208c;box-shadow:1px 2px 16px rgba(0,0,0,0.42)"></div>
<!--CY-->
<svg class="a" style="left:86px;top:497px" width="20" height="20"><defs><linearGradient id="fi" x1="0" y1="0" x2="1" y2="1"><stop offset="0" stop-color="#c6e2f3"/><stop offset="1" stop-color="#e9f3f9"/></linearGradient></defs><rect x="0.2" y="0" width="19.5" height="19.5" fill="url(#fi)"/><path d="M6 16.5V5.2Q6 3.5 7.8 3.5H14.3V6.4H9.2V8.9H13.4V11.8H9.2V16.5Z" fill="#e3892e"/><path d="M9.2 16.5V11.8H13.4V8.9H9.2V6.4H14.3" fill="none" stroke="#b55f18" stroke-width="0.6"/></svg>
<div class="txt" style="left:111.6px;top:500.5px;font-size:14.5px;line-height:14.5px;color:#111">Cylinder</div>
<svg class="a" style="left:710px;top:495px" width="24" height="24"><path d="M6.4 6.3L17.7 17.6M17.7 6.3L6.4 17.6" stroke="#111" stroke-width="1.3"/></svg>
<!-- dimensions group -->
<div class="gb" style="left:90px;top:548px;width:294px;height:258px"></div>
<div class="glab" style="left:103.4px;top:543.3px;font-size:12px;line-height:12px">Dimensions</div>
<div class="a" style="left:103px;top:561px;width:268px;height:232px;border:1px solid #3aa6df"></div>
<div class="a" style="left:154px;top:562px;width:1px;height:103px;background:#e2e2e2"></div>
<div class="a" style="left:266.5px;top:562px;width:1px;height:103px;background:#e2e2e2"></div>
<div class="a" style="left:103.5px;top:627.2px;width:266.5px;height:1px;background:#d8d8d8"></div>
<div class="a" style="left:103.5px;top:664.8px;width:266.5px;height:1px;background:#d8d8d8"></div>
<div class="a" style="left:155px;top:591.6px;width:95px;height:35.4px;border:1px solid #cfe4f4;border-right:none"></div>
<div class="a" style="left:155px;top:628.4px;width:95px;height:36px;border:1px solid #cfe4f4;border-right:none"></div>
<svg class="a" style="left:250px;top:591px" width="17" height="75"><g fill="#27a0dc"><rect x="0" y="0.2" width="17" height="16.5"/><rect x="0" y="18.8" width="17" height="16.9"/><rect x="0" y="37.6" width="17" height="16.6"/><rect x="0" y="56" width="17" height="17.1"/></g><g fill="#fff"><path d="M4.3 10.6H11.7L8 6.8Z"/><path d="M4.3 24.6H11.7L8 28.4Z"/><path d="M4.3 48.2H11.7L8 44.4Z"/><path d="M4.3 62.2H11.7L8 66Z"/></g></svg>
<div class="txt" style="left:108.9px;top:569.5px;font-size:14.6px;line-height:14.6px;color:#1a1a1a">Name</div>
<div class="txt" style="left:154px;width:113px;text-align:center;top:569.5px;font-size:14.6px;line-height:14.6px;color:#1a1a1a">Size</div>
<div class="txt" style="left:281px;top:569.5px;font-size:14.6px;line-height:14.6px;color:#1a1a1a">Description</div>
<div class="txt" style="left:104.3px;top:603px;font-size:14px;line-height:14px;color:#1a1a1a">D</div>
<div class="txt" style="left:104.3px;top:639.8px;font-size:14px;line-height:14px;color:#1a1a1a">L</div>
<div class="txt" style="left:160.1px;top:604px;font-size:11.7px;line-height:11.7px;color:#1a1a1a">50.00 mm</div>
<div class="txt" style="left:160.4px;top:641.9px;font-size:11.7px;line-height:11.7px;color:#1a1a1a">100.00 mm</div>
<div class="txt" style="left:273px;top:602px;font-size:14.5px;line-height:14.5px;color:#1a1a1a">Main Diame...</div>
<div class="txt" style="left:273px;top:638.8px;font-size:14.5px;line-height:14.5px;color:#1a1a1a">Section Len...</div>
<!-- preview group -->
<div class="gb" style="left:391px;top:548px;width:337px;height:258px"></div>
<div class="glab" style="left:404.7px;top:543.2px;font-size:12.3px;line-height:12.3px">Preview</div>
<svg class="a" style="left:480px;top:630px" width="160" height="130">
<g transform="translate(-480 -630)">
<path d="M508.3 644.5H584.3A10.4 38.55 0 0 1 584.3 721.6H508.3Z" fill="#27a0dc"/>
<ellipse cx="508.3" cy="683.05" rx="13.9" ry="38.55" fill="#27a0dc" stroke="#fff" stroke-width="1.3"/>
<path d="M487.2 683.2H600.3" stroke="#d92a2a" stroke-width="2" stroke-dasharray="14.2 3.2 3.6 3.2"/>
<g stroke="#474747" stroke-width="1.1" fill="none">
<path d="M584.5 644.8H632M584.5 721.3H632M624.9 650V716"/>
<path d="M507.6 722.5V753.2M582.9 722.5V753.2M512 746H578"/>
</g>
<g fill="#474747">
<path d="M624.9 645.2L621.9 658.5H627.9Z"/><path d="M624.9 720.9L621.9 707.6H627.9Z"/>
<path d="M508 746L521 743V749Z"/><path d="M582.5 746L569.5 743V749Z"/>
</g>
<text x="539.6" y="743" font-family="Liberation Sans" font-size="20" fill="#474747">L</text>
<text transform="translate(621.3 697.8) rotate(-90)" font-family="Liberation Sans" font-size="19.3" fill="#474747">ØD</text>
</g>
</svg>
<div class="a" style="left:551px;top:813px;width:85px;height:25px;border:1px solid #3aa6df;font-size:12.5px;line-height:12.5px;text-align:center;padding-top:6.9px;color:#1a1a1a">OK</div>
<div class="a" style="left:643px;top:813px;width:85px;height:25px;border:1px solid #3aa6df;font-size:12.5px;line-height:12.5px;text-align:center;padding-top:6.9px;color:#1a1a1a">Cancel</div>

<!--/CY-->
<!--AN-->
<svg class="a" style="left:0;top:0" width="1508" height="897" style="pointer-events:none">
<defs>
<filter id="ds" x="-20%" y="-20%" width="150%" height="150%"><feGaussianBlur in="SourceAlpha" stdDeviation="2.2"/><feOffset dx="3" dy="3" result="o"/><feComponentTransfer><feFuncA type="linear" slope="0.5"/></feComponentTransfer><feMerge><feMergeNode/><feMergeNode in="SourceGraphic"/></feMerge></filter>
<filter id="ds2" x="-30%" y="-30%" width="170%" height="170%"><feGaussianBlur in="SourceAlpha" stdDeviation="3"/><feOffset dx="4" dy="5" result="o"/><feComponentTransfer><feFuncA type="linear" slope="0.55"/></feComponentTransfer><feMerge><feMergeNode/><feMergeNode in="SourceGraphic"/></feMerge></filter>
<linearGradient id="ring" x1="0.2" y1="0" x2="0.8" y2="1"><stop offset="0" stop-color="#fafafa"/><stop offset="0.5" stop-color="#e6e9ea"/><stop offset="1" stop-color="#c9cccd"/></linearGradient>
<radialGradient id="red" cx="0.5" cy="0.35" r="0.7"><stop offset="0" stop-color="#e20a05"/><stop offset="0.8" stop-color="#dc1a10"/><stop offset="1" stop-color="#c81810"/></radialGradient>
<linearGradient id="gloss" x1="0.3" y1="0" x2="0.1" y2="1"><stop offset="0" stop-color="#d9604a"/><stop offset="1" stop-color="#f0a08e"/></linearGradient>
<linearGradient id="dig" x1="0" y1="0" x2="0" y2="1"><stop offset="0" stop-color="#d6d6d6"/><stop offset="1" stop-color="#f0f0f0"/></linearGradient>
<linearGradient id="glow" x1="0" y1="0" x2="0" y2="1"><stop offset="0" stop-color="#f7805c"/><stop offset="0.6" stop-color="#ff5a20"/><stop offset="1" stop-color="#e8400c"/></linearGradient>
<clipPath id="c3"><circle cx="1181.8" cy="459.5" r="32"/></clipPath>
<clipPath id="c4"><circle cx="121" cy="719" r="35.4"/></clipPath>
</defs>
<!-- highlight rect 1 -->
<rect x="1035.2" y="448.8" width="27.5" height="23.5" fill="none" stroke="#c0482c" stroke-width="3.6" filter="url(#ds)"/>
<!-- arrow -->
<g fill="#c0503a" filter="url(#ds)">
<path d="M1076 462.8L1091.5 455.2L1088 462.8L1091.5 470.5Z"/>
<rect x="1087" y="460.8" width="16.6" height="4.1"/>
<rect x="1107.7" y="460.8" width="3.6" height="4.1"/>
<rect x="1115.5" y="460.8" width="11.9" height="4.1"/>
<rect x="1131.6" y="460.8" width="3.6" height="4.1"/>
<rect x="1140" y="460.8" width="6" height="4.1"/>
</g>
<!-- circle 3 -->
<g filter="url(#ds2)">
<circle cx="1181.4" cy="459.4" r="36.6" fill="url(#ring)" stroke="#b4b8b9" stroke-width="0.9"/>
</g>
<circle cx="1181.8" cy="459.5" r="32.4" fill="none" stroke="#a9adae" stroke-width="0.9"/>
<circle cx="1181.8" cy="459.5" r="32" fill="url(#red)"/>
<g clip-path="url(#c3)">
<path d="M1140 420H1230V444.5C1205 440 1185 441 1174 451C1165 460 1160 472 1157 487L1140 495Z" fill="url(#gloss)" opacity="0.88"/>
<ellipse cx="1181.5" cy="490" rx="14" ry="9.5" fill="url(#glow)"/>
</g>
<circle cx="1181.8" cy="459.5" r="31.3" fill="none" stroke="#e0100a" stroke-width="1.4"/>
<text transform="translate(1181.6 480.4) scale(1.16 1)" text-anchor="middle" font-family="Liberation Sans" font-weight="bold" font-size="60" fill="url(#dig)" stroke="#e2e2e2" stroke-width="0.8">3</text>
<!-- highlight rect 2 -->
<rect x="93.5" y="594.2" width="149.8" height="78.4" fill="none" stroke="#c0482c" stroke-width="3.6" filter="url(#ds)"/>
<!-- circle 4 -->
<g filter="url(#ds2)">
<circle cx="120.8" cy="719" r="40.1" fill="url(#ring)" stroke="#b4b8b9" stroke-width="0.9"/>
</g>
<circle cx="121" cy="719" r="35.8" fill="none" stroke="#a9adae" stroke-width="0.9"/>
<circle cx="121" cy="719" r="35.4" fill="url(#red)"/>
<g clip-path="url(#c4)">
<path d="M80 675H170V701.9C146.7 697.4 124.5 698.5 112.4 709.6C102.4 719.6 96.9 732.8 93.6 749.4L80 756Z" fill="url(#gloss)" opacity="0.88"/>
<rect x="121.6" y="741" width="11.4" height="13" fill="url(#glow)"/>
</g>
<circle cx="121" cy="719" r="34.7" fill="none" stroke="#e0100a" stroke-width="1.4"/>
<text transform="translate(120.2 741.3) scale(1.08 1)" text-anchor="middle" font-family="Liberation Sans" font-weight="bold" font-size="64" fill="url(#dig)" stroke="#e2e2e2" stroke-width="1">4</text>
</svg>

<!--/AN-->
</body></html>
